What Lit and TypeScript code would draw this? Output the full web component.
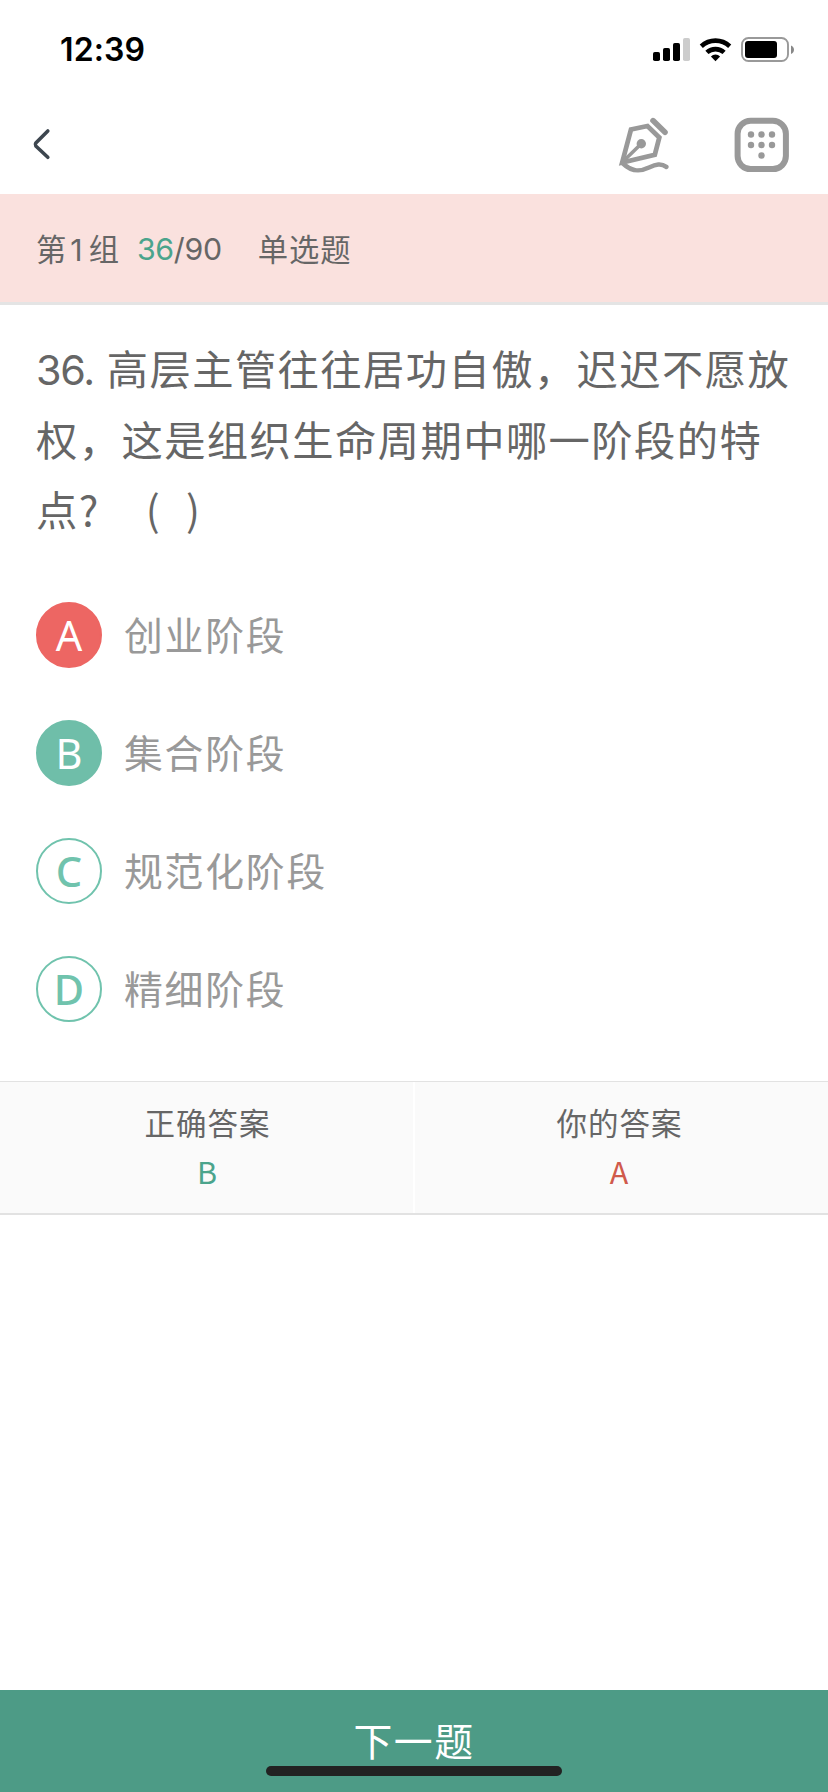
import { LitElement, html, css, svg } from "lit";
import { customElement, property } from "lit/decorators.js";

@customElement("status-bar")
class StatusBar extends LitElement {
  static styles = css`
    :host { display: flex; justify-content: space-between; height: 98px; box-sizing: border-box; padding: 30px 32px 0 60px; }
    .time { font: 600 32px/40px Inter, sans-serif; letter-spacing: 0.1px; color: #000; }
    .icons { display: block; width: 144px; height: 40px; }
  `;
  render() {
    return html`
      <div class="time">12:39</div>
      <svg class="icons" viewBox="652 30 144 40">
        <rect x="653" y="52" width="7" height="9" rx="1.8" />
        <rect x="663" y="48" width="7" height="13" rx="1.8" />
        <rect x="673" y="43" width="7" height="18" rx="1.8" />
        <rect x="683" y="38" width="7" height="23" rx="1.8" fill="#ccc" />
        <g fill="none" stroke="#000" stroke-width="4.6">
          <path d="M701.3 46.2a21 21 0 0 1 28.4 0" />
          <path d="M706.9 52.4a12.8 12.8 0 0 1 17.2 0" />
        </g>
        <path d="M715.5 61.2l-4.6-4.8a6.8 6.8 0 0 1 9.2 0z" />
        <rect x="742" y="38" width="46" height="23" rx="6.5" fill="none" stroke="#999" stroke-width="1.9" />
        <rect x="745" y="41" width="32" height="17" rx="3" />
        <path d="M791 45.500c4 1.500 4 7 0 8.500z" fill="#888" />
      </svg>
    `;
  }
}

@customElement("nav-bar")
class NavBar extends LitElement {
  static styles = css`
    :host { display: flex; align-items: center; height: 96px; box-sizing: border-box; padding: 0 36px 0 30px; }
    svg { display: block; }
    .back { width: 24px; height: 36px; margin-right: auto; }
    .pen { width: 56px; height: 60px; margin-right: 58px; }
    .pad { width: 60px; height: 60px; }
  `;
  render() {
    return html`
      <svg class="back" viewBox="30 128 24 36" fill="none" stroke="#3d464f" stroke-width="3.6" stroke-linecap="round" stroke-linejoin="round">
        <path d="M47.800 131L35.800 143Q34.800 144.500 35.800 146L47.800 157.300" />
      </svg>
      <svg class="pen" viewBox="618 116 56 60" fill="none" stroke="#999" stroke-width="4.8" stroke-linecap="round" stroke-linejoin="round">
        <path d="M622.200 162.500L631 129.500L647.500 126L659.300 137.500L654.800 154.800Z" stroke-linejoin="miter" />
        <path d="M653 120.600L665 132.300" stroke-width="5.600" />
        <path d="M623 161.500L641 144" stroke-width="3.600" />
        <circle cx="641.300" cy="143.800" r="4.700" fill="#999" stroke="none" />
        <path d="M622.500 163C631 171.500 639 172.300 649 167.500C656 164.300 661 163 666.300 166.800" stroke-width="4.600" />
      </svg>
      <svg class="pad" viewBox="732 116 60 60">
        <rect x="737.600" y="120.800" width="48.300" height="48.300" rx="13" fill="none" stroke="#999" stroke-width="6" />
        ${[[751, 134.500], [761.500, 134.500], [772, 134.500], [751, 145], [761.500, 145], [772, 145], [761.500, 155.500]].map(
          ([x, y]) => svg`<circle cx=${x} cy=${y} r="3.200" fill="#999" />`
        )}
      </svg>
    `;
  }
}

@customElement("answer-option")
class AnswerOption extends LitElement {
  @property() letter = "";
  @property() label = "";
  @property() state = "plain";
  static styles = css`
    :host { display: flex; height: 66px; }
    .mark { display: flex; justify-content: center; width: 66px; height: 66px; box-sizing: border-box; border-radius: 50%;
      border: 2px solid #70c3ad; color: #70c3ad; font: 500 41.500px/63px "Noto Sans", sans-serif; margin-right: 22px; }
    .wrong, .right { color: #fff; font-weight: 400; }
    .wrong { background: #ed6663; border-color: #ed6663; }
    .right { background: #6fbea9; border-color: #6fbea9; }
    .label { font: 400 38.800px/63px "Noto Sans CJK SC", sans-serif; letter-spacing: 1.800px; color: #999; }
  `;
  render() {
    return html`<div class="mark ${this.state}">${this.letter}</div><div class="label">${this.label}</div>`;
  }
}

@customElement("app-root")
class AppRoot extends LitElement {
  static styles = css`
    :host { display: flex; flex-direction: column; height: 1792px; background: #fff; color: #666;
      font-family: "Noto Sans CJK SC", sans-serif; }
    .num { font-family: Inter, sans-serif; line-height: 1; }
    .band { display: flex; align-items: center; height: 111px; box-sizing: border-box; padding: 0 36px;
      background: #fae1de; border-bottom: 3px solid #e4e4e4; font-size: 30.300px; line-height: 44px; letter-spacing: 1px; }
    .group .num { margin: 0 5px 0 3px; }
    .progress { margin-left: 17px; padding-top: 2px; letter-spacing: -0.300px; }
    .current { color: #4ba48c; }
    .type { margin-left: 36px; }
    .question { padding: 27px 0 0 36px; font-size: 41.300px; line-height: 70.500px; letter-spacing: 1.420px; white-space: nowrap; }
    .question .num { letter-spacing: -1.300px; margin-right: 13px; }
    .mark { display: inline-block; width: 42px; letter-spacing: 0; }
    .open, .close { margin-left: 25px; }
    .options { display: flex; flex-direction: column; gap: 52px; padding: 58.500px 36px 59px; }
    .answers { display: grid; grid-template-columns: 413px 1fr; gap: 2px; border-top: 1px solid #e2e2e2; border-bottom: 2px solid #e2e2e2; }
    .answer { height: 131px; box-sizing: border-box; padding: 16px 0 0 2px; background: #fafafa; text-align: center;
      font-size: 30.500px; line-height: 48.500px; letter-spacing: 1px; }
    .answer + .answer { padding: 16px 4px 0 0; }
    .good { color: #4ba48c; }
    .bad { color: #d05a4b; }
    .next { position: relative; display: flex; justify-content: center; height: 102px; margin-top: auto; background: #4d9b86;
      color: #fff; font-size: 38.800px; line-height: 98px; letter-spacing: 1.600px; }
    .home { position: absolute; left: 266px; bottom: 16px; width: 296px; height: 10px; border-radius: 5px; background: #222; }
  `;
  render() {
    return html`
      <status-bar></status-bar>
      <nav-bar></nav-bar>
      <div class="band">
        <div class="group">第<span class="num">1</span>组</div>
        <div class="progress num"><span class="current">36</span>/90</div>
        <div class="type">单选题</div>
      </div>
      <div class="question">
        <div><span class="num">36.</span>高层主管往往居功自傲，迟迟不愿放</div>
        <div>权，这是组织生命周期中哪一阶段的特</div>
        <div>点<span class="mark">?</span><span class="open">(</span><span class="close">)</span></div>
      </div>
      <div class="options">
        <answer-option letter="A" label="创业阶段" state="wrong"></answer-option>
        <answer-option letter="B" label="集合阶段" state="right"></answer-option>
        <answer-option letter="C" label="规范化阶段"></answer-option>
        <answer-option letter="D" label="精细阶段"></answer-option>
      </div>
      <div class="answers">
        <div class="answer"><div>正确答案</div><div class="good">B</div></div>
        <div class="answer"><div>你的答案</div><div class="bad">A</div></div>
      </div>
      <div class="next">下一题<div class="home"></div></div>
    `;
  }
}
